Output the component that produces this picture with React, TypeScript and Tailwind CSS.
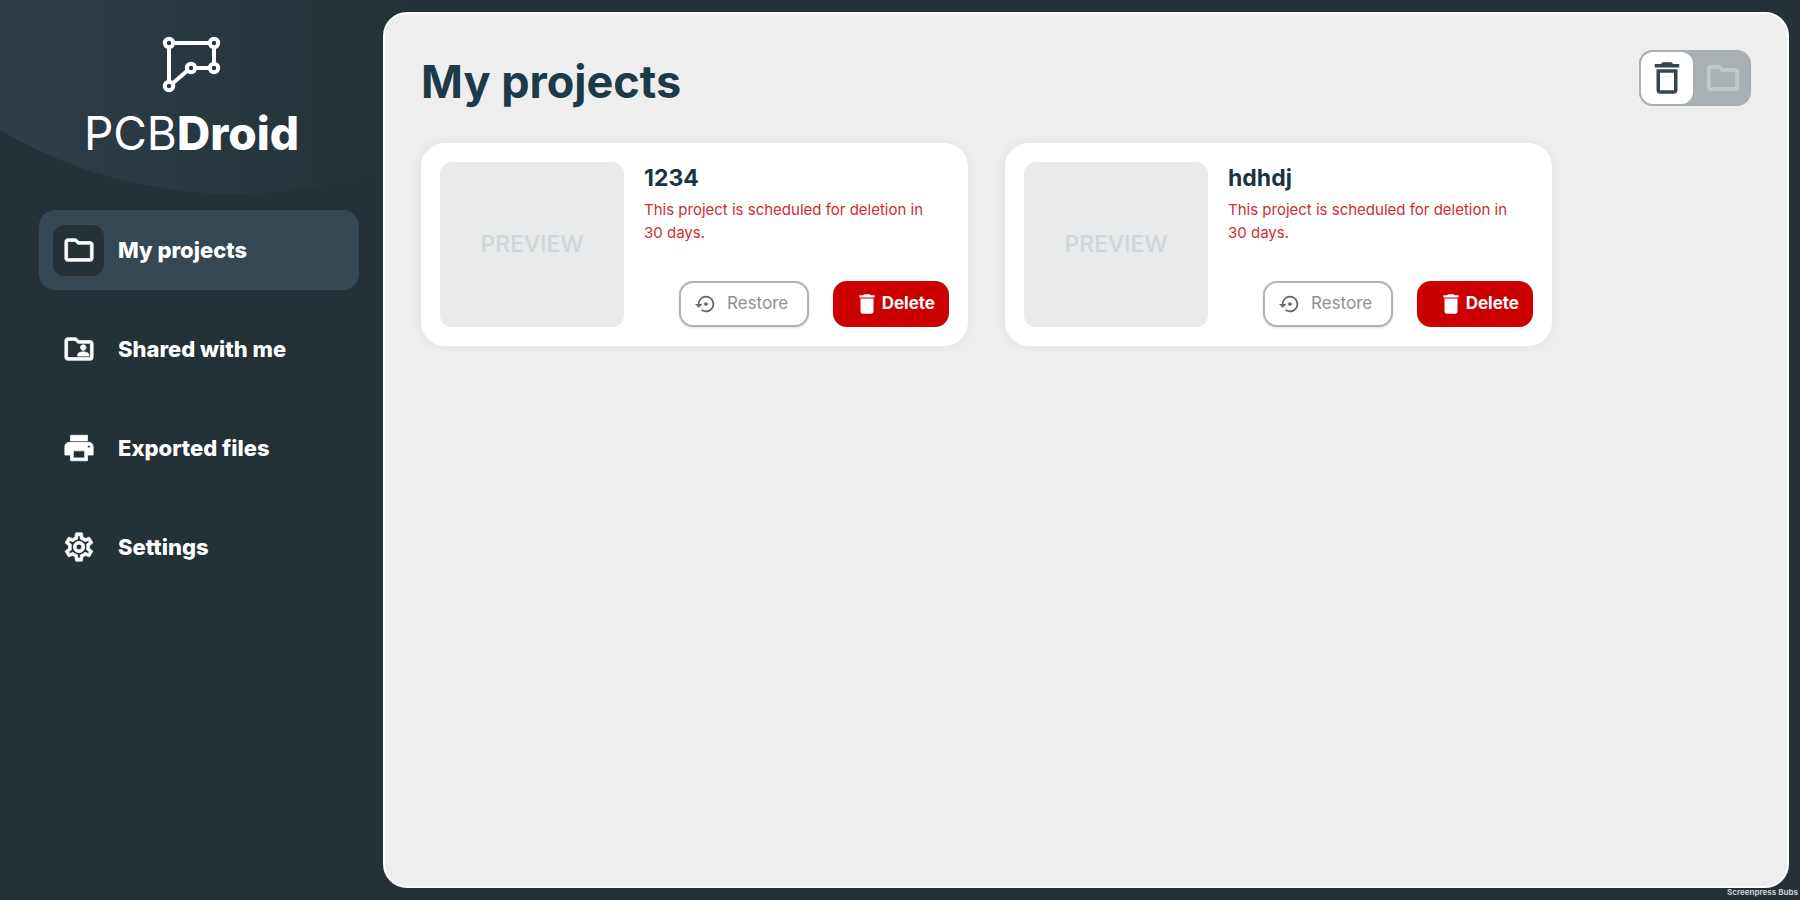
import { useState } from "react";
import {
  MdDelete,
  MdLocalPrintshop,
  MdOutlineDelete,
  MdOutlineFolder,
  MdOutlineFolderShared,
  MdOutlineSettings,
  MdSettingsBackupRestore,
} from "react-icons/md";
import type { IconType } from "react-icons";

const navItems: { label: string; icon: IconType }[] = [
  { label: "My projects", icon: MdOutlineFolder },
  { label: "Shared with me", icon: MdOutlineFolderShared },
  { label: "Exported files", icon: MdLocalPrintshop },
  { label: "Settings", icon: MdOutlineSettings },
];

const projects = ["1234", "hdhdj"];

function Logo() {
  return (
    <div className="flex flex-col items-center text-white">
      <svg width="60" height="60" viewBox="0 0 60 60" fill="none" stroke="currentColor" strokeWidth="4" aria-hidden="true">
        <path d="M7 12v35M12 8h35M52 13v15M47 33H34M25 36L11 48" />
        <circle cx="7" cy="8" r="4.2" />
        <circle cx="52" cy="8" r="4.2" />
        <circle cx="52" cy="33" r="4.2" />
        <circle cx="29" cy="33" r="4.2" />
        <circle cx="7" cy="51" r="4.2" />
      </svg>
      <p className="mt-2.5 text-[46px] leading-[56px]">
        PCB<span className="font-extrabold">Droid</span>
      </p>
    </div>
  );
}

function Sidebar() {
  return (
    <aside className="relative flex w-[383px] shrink-0 flex-col px-6 pt-[35px]">
      <Logo />
      <nav className="mt-[49px] ml-[15px] flex flex-col gap-[19px]" aria-label="Main">
        {navItems.map(({ label, icon: Icon }, index) => (
          <a
            key={label}
            href="#"
            aria-current={index === 0 ? "page" : undefined}
            className={`flex h-20 items-center gap-3.5 rounded-2xl px-3.5 text-[22px] font-extrabold text-white ${index === 0 ? "bg-[#344855]" : ""}`}
          >
            <span className={`flex size-[51px] items-center justify-center rounded-xl ${index === 0 ? "bg-[#243136]" : ""}`}>
              <Icon className="size-[34px] stroke-current stroke-[0.5] [&>path[fill=none]]:hidden" />
            </span>
            {label}
          </a>
        ))}
      </nav>
    </aside>
  );
}

function ProjectCard({ name }: { name: string }) {
  return (
    <article className="flex w-[547px] gap-5 rounded-[24px] bg-white p-[19px] shadow-[0_0_6px_6px_rgba(0,0,0,0.025)]">
      <div className="flex h-[165px] w-[184px] shrink-0 items-center justify-center rounded-xl bg-[#e8eaeb] text-[23px] font-medium text-[#d2d6d8]">
        PREVIEW
      </div>
      <div className="flex grow flex-col">
        <h2 className="text-[23px] leading-8 font-bold text-[#1c3440]">{name}</h2>
        <p className="mt-1 pr-4 text-[15px] leading-[23px] text-[#cc2e33]">This project is scheduled for deletion in 30 days.</p>
        <div className="mt-auto flex justify-end gap-6">
          <button className="flex h-[46px] w-[130px] items-center gap-2.5 rounded-[14px] border-2 border-[#b0b4b6] bg-white pl-3.5 text-[17px] text-[#8b9296] shadow-sm">
            <MdSettingsBackupRestore className="size-[22px] text-[#5f696e]" />
            Restore
          </button>
          <button className="flex h-[46px] w-[116px] items-center justify-end gap-0.5 rounded-[14px] bg-[#cc0000] pr-3.5 text-[17px] font-bold text-white">
            <MdDelete className="size-[26px]" />
            Delete
          </button>
        </div>
      </div>
    </article>
  );
}

export default function App() {
  const [view, setView] = useState<"trash" | "folder">("trash");
  return (
    <div className="relative flex min-h-screen overflow-hidden bg-[#243136] font-[Inter,sans-serif]">
      <div className="absolute top-[-734px] left-[-229px] size-[928px] rounded-full bg-linear-to-r from-[#2c3e47] from-25% to-[#243136] to-70%" />
      <Sidebar />
      <main className="relative my-3 mr-[11px] grow rounded-[24px] border-2 border-white bg-[#eeeeee] px-9 pt-9">
        <header className="flex items-start justify-between">
          <h1 className="pt-1 text-[45px] leading-[56px] font-bold text-[#1c3a48]">My projects</h1>
          <div className="flex rounded-[14px] bg-[#a9b0b3]">
            <button
              aria-label="Deleted projects"
              aria-pressed={view === "trash"}
              onClick={() => setView("trash")}
              className="flex size-14 items-center justify-center rounded-[14px] border-2 border-[#a9b0b3] bg-white text-[#33454f]"
            >
              <MdOutlineDelete className="size-[42px]" />
            </button>
            <button
              aria-label="Active projects"
              aria-pressed={view === "folder"}
              onClick={() => setView("folder")}
              className="flex size-14 items-center justify-center text-[#c3c8ca]"
            >
              <MdOutlineFolder className="size-[38px] stroke-current stroke-[0.5] [&>path[fill=none]]:hidden" />
            </button>
          </div>
        </header>
        <section className="mt-[33px] flex flex-wrap gap-[37px]">
          {projects.map((name) => (
            <ProjectCard key={name} name={name} />
          ))}
        </section>
      </main>
      <small className="absolute right-0.5 bottom-0.5 text-[8px] leading-3 font-bold text-[#c9cdcf]">Screenpress Bubs</small>
    </div>
  );
}
